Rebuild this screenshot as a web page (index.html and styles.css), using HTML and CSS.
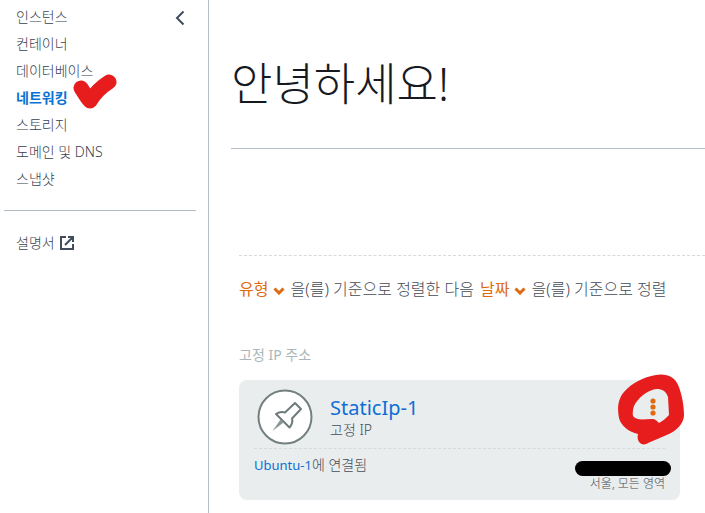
FILE: index.html
```html
<!DOCTYPE html>
<html lang="ko">
<head>
<meta charset="utf-8">
<meta name="viewport" content="width=device-width, initial-scale=1">
<title>네트워킹</title>
<link rel="stylesheet" href="styles.css">
</head>
<body>
<div class="layout">
  <aside class="sidebar">
    <nav class="menu" aria-label="서비스">
      <ul class="menu-list">
        <li><a href="#">인스턴스</a></li>
        <li><a href="#">컨테이너</a></li>
        <li><a href="#">데이터베이스</a></li>
        <li class="marked"><a class="active" href="#" aria-current="page">네트워킹</a>
          <svg class="check-mark" viewBox="0 0 46 36" aria-hidden="true"><path d="M9 14C12 18 14 23 18 27C23 19 29 13 37 8" fill="none" stroke="#e71d1d" stroke-width="15" stroke-linecap="round" stroke-linejoin="round"/></svg>
        </li>
        <li><a href="#">스토리지</a></li>
        <li><a href="#">도메인 및 DNS</a></li>
        <li><a href="#">스냅샷</a></li>
      </ul>
      <button class="collapse" type="button" aria-label="메뉴 접기">
        <svg width="10" height="16" viewBox="0 0 10 16"><path d="M8.500 1.500L2 8l6.500 6.500" fill="none" stroke="#414d5c" stroke-width="2"/></svg>
      </button>
    </nav>
    <hr class="divider">
    <a class="docs" href="#">설명서
      <svg width="14" height="14" viewBox="0 0 14 14" aria-hidden="true"><path d="M6 1H1v12h12V8M8 1h5v5M13 1L5 9" fill="none" stroke="#414d5c" stroke-width="2"/></svg>
    </a>
  </aside>
  <main class="content">
    <h1 class="greeting">안녕하세요!</h1>
    <section class="resources">
      <div class="sort">
        <button type="button">유형 <svg width="12" height="8" viewBox="0 0 12 8"><path d="M1.500 1.500L6 6l4.500-4.500" fill="none" stroke="#df6a10" stroke-width="3"/></svg></button>
        <span>을(를) 기준으로 정렬한 다음</span>
        <button type="button">날짜 <svg width="12" height="8" viewBox="0 0 12 8"><path d="M1.500 1.500L6 6l4.500-4.500" fill="none" stroke="#df6a10" stroke-width="3"/></svg></button>
        <span>을(를) 기준으로 정렬</span>
      </div>
      <h2 class="group-title">고정 IP 주소</h2>
      <article class="card">
        <header class="card-head">
          <svg class="pin" viewBox="0 0 56 56" aria-hidden="true">
            <circle cx="28" cy="28" r="26.500" fill="#fff" stroke="#727f7e" stroke-width="2"/>
            <path d="M38 14l6 6-9 9.500c1 3 0 6-2.500 9L19 25c3-2 6-2.500 9-1.500z" fill="none" stroke="#6f7b7b" stroke-width="2" stroke-linejoin="round"/>
            <path d="M23.500 30.500l3 3L15.500 42z" fill="#8a9698"/>
          </svg>
          <div class="card-name">
            <a href="#">StaticIp-1</a>
            <span>고정 IP</span>
          </div>
          <button class="more" type="button" aria-label="작업">
            <svg width="6" height="18" viewBox="0 0 6 18" fill="#df6a10"><circle cx="3" cy="3" r="2.600"/><circle cx="3" cy="9" r="2.600"/><circle cx="3" cy="15" r="2.600"/></svg>
          </button>
        </header>
        <div class="card-body">
          <p class="attached"><a href="#">Ubuntu-1</a>에 연결됨</p>
          <div class="place">
            <span class="redacted"></span>
            <span class="region">서울, 모든 영역</span>
          </div>
        </div>
        <svg class="ring" viewBox="0 0 68 72" aria-hidden="true"><path fill="#e71d1d" fill-rule="evenodd" d="M39 1C49-1 58 3 61 11C65 20 67 32 67 42C66 50 60 56 52 60L31 69C25 73 19 68 21 60C12 58 4 52 2 44C0 34 1 25 7 18C15 9 26 3 39 1ZM40 15C34 15 26 20 21 26C17 30 15 36 16 42C20 47 27 45 35 45C38 45 40 47 42 49C46 47 49 44 52 41L51 23C49 17 45 15 40 15Z"/></svg>
      </article>
    </section>
  </main>
</div>
</body>
</html>
```

FILE: styles.css
```css
* {
  box-sizing: border-box;
}

body {
  margin: 0;
  background: #fff;
  color: #37424f;
  font: 300 14px/20px "Noto Sans", "Noto Sans CJK KR", sans-serif;
}

a {
  color: #0f6fd6;
  text-decoration: none;
}

button {
  padding: 0;
  border: 0;
  background: none;
  font: inherit;
  cursor: pointer;
}

.layout {
  display: grid;
  grid-template-columns: 209px minmax(0, 1fr);
  min-height: 100vh;
}

.sidebar {
  padding: 3px 12px 0 4px;
  border-right: 1px solid #b6bec9;
}

.sidebar a {
  color: #37424f;
}

.menu {
  display: flex;
  justify-content: space-between;
  align-items: flex-start;
  padding: 0 11px 0 12px;
}

.menu-list {
  margin: 0;
  padding: 0;
  list-style: none;
  line-height: 27px;
}

.marked {
  position: relative;
}

.sidebar .active {
  color: #0972d3;
  font-weight: 700;
}

.check-mark {
  position: absolute;
  top: -10px;
  left: 56px;
  width: 46px;
  height: 36px;
}

.collapse {
  display: flex;
  margin-top: 7px;
}

.divider {
  height: 1px;
  margin: 18px 0 22px;
  border: 0;
  background: #b0bac3;
}

.docs {
  display: flex;
  align-items: center;
  gap: 5px;
  padding-left: 12px;
}

.content {
  padding-left: 22px;
}

.greeting {
  margin: 0;
  padding: 52px 0 32px;
  border-bottom: 1px solid #b6bec9;
  color: #16191f;
  font-size: 45px;
  font-weight: 300;
  line-height: 64px;
}

.resources {
  margin: 106px 0 0 8px;
  border-top: 1px dashed #d5dbdb;
}

.sort {
  display: flex;
  flex-wrap: wrap;
  gap: 6px;
  padding: 21px 0 44px;
  color: #454c55;
  font-size: 16px;
  line-height: 24px;
}

.sort button {
  color: #df6a10;
  font-weight: 400;
}

.group-title {
  margin: 0 0 15px;
  color: #aab7b8;
  font-size: 14px;
  font-weight: 400;
  line-height: 20px;
}

.card {
  position: relative;
  margin-right: 25px;
  padding: 9px 15px 8px;
  border-radius: 8px;
  background: #e9eded;
  color: #454c55;
}

.card-head {
  display: flex;
  align-items: flex-start;
  padding: 0 9px 3px 3px;
  border-bottom: 1px dashed #d5dbdb;
}

.pin {
  width: 56px;
  height: 56px;
}

.card-name {
  display: grid;
  flex: 1;
  margin: 7px 0 0 17px;
}

.card-name a {
  font-size: 20px;
  font-weight: 400;
  line-height: 24px;
}

.card-name span {
  line-height: 20px;
}

.more {
  display: flex;
  margin-top: 9px;
}

.card-body {
  display: flex;
  justify-content: space-between;
}

.attached {
  margin: 6px 0 0;
}

.attached a {
  font-size: 13px;
  font-weight: 400;
}

.place {
  display: grid;
  justify-items: end;
  padding-top: 12px;
}

.redacted {
  width: 96px;
  height: 15px;
  margin-right: -6px;
  border-radius: 8px;
  background: #000;
}

.region {
  font-size: 12px;
  line-height: 16px;
}

.ring {
  position: absolute;
  top: -6px;
  right: -5px;
  width: 68px;
  height: 72px;
  pointer-events: none;
}
```
